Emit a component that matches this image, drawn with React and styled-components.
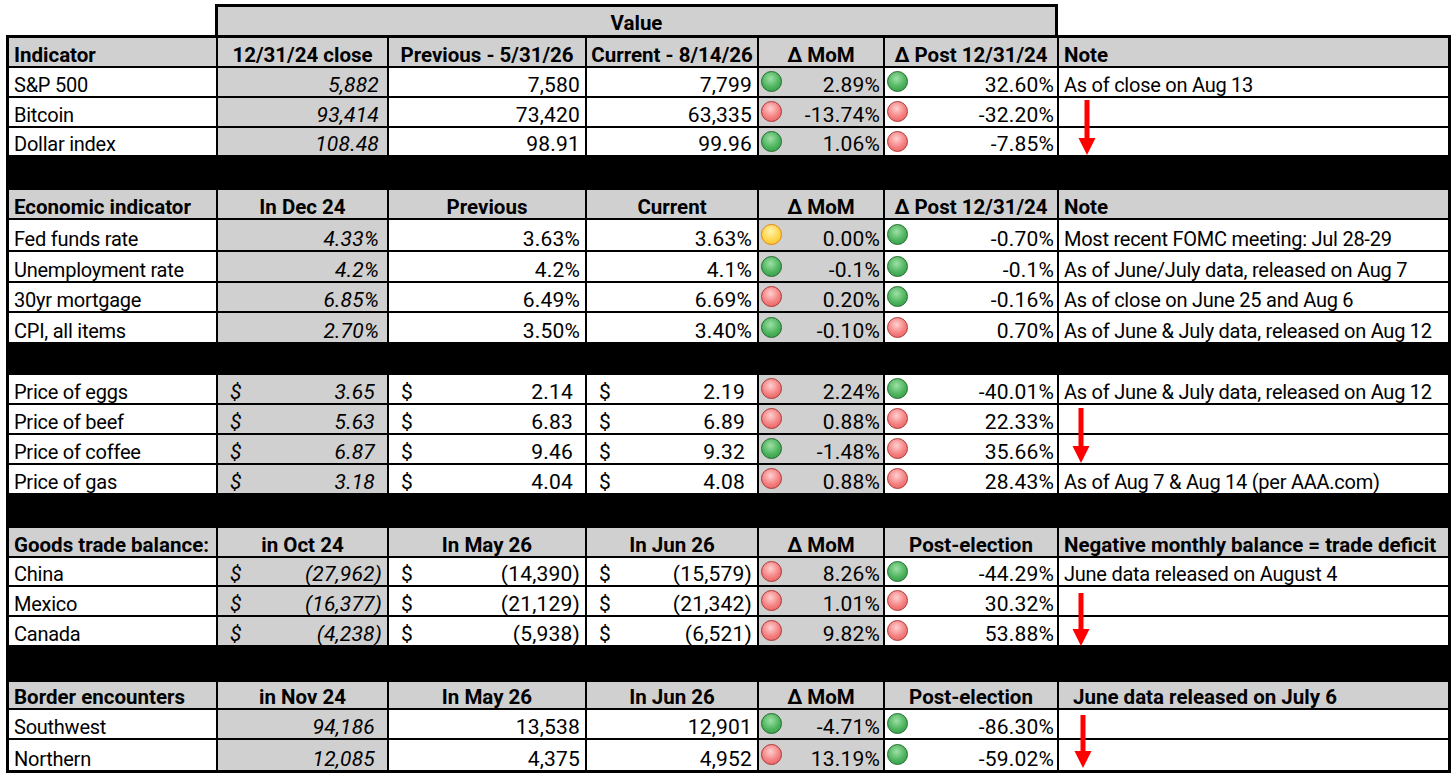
import React from 'react';
import styled, { createGlobalStyle } from 'styled-components';

const GRAY = '#d0d0d0';
const COLS = '209px 171px 198px 172px 126px 174px 1fr';

const GlobalStyle = createGlobalStyle`
  html, body { margin: 0; padding: 0; background: #fff; }
  body { font-family: Roboto, "Liberation Sans", Arial, sans-serif; color: #000; }
`;

const Page = styled.div`
  padding: 4px 0 0 6px;
  width: 1445px;
`;

const ValueBar = styled.div`
  margin-left: 209px;
  width: 843px;
  height: 31px;
  box-sizing: border-box;
  border: 3px solid #000;
  border-bottom: none;
  background: ${GRAY};
  display: flex;
  align-items: flex-end;
  justify-content: center;
  padding-bottom: 2px;
  font-weight: 700;
  font-size: 20.5px;
  line-height: 20px;
`;

const Sheet = styled.div`
  width: 1445px;
  box-sizing: border-box;
  border: 3px solid #000;
`;

const Row = styled.div`
  display: grid;
  grid-template-columns: ${COLS};
  height: ${(p) => p.$h || 30}px;
  box-sizing: border-box;
  border-bottom: 2px solid #000;
  &:last-child { border-bottom: none; }
`;

const Divider = styled.div`
  height: ${(p) => p.$h}px;
  background: #000;
`;

const Cell = styled.div`
  position: relative;
  display: flex;
  align-items: flex-end;
  box-sizing: border-box;
  min-width: 0;
  padding: 0 5px 1px 5px;
  border-right: 2px solid #000;
  background: #fff;
  font-size: 20px;
  line-height: 20px;
  letter-spacing: -0.25px;
  white-space: nowrap;
  &:last-child { border-right: none; }
`;

const HeadCell = styled(Cell)`
  background: ${GRAY};
  font-weight: 700;
  font-size: 20.5px;
  letter-spacing: 0;
  justify-content: ${(p) => (p.$left ? 'flex-start' : 'center')};
  padding-left: ${(p) => p.$indent || 5}px;
`;

const LabelCell = styled(Cell)`
  justify-content: flex-start;
`;

const NumCell = styled(Cell)`
  justify-content: ${(p) => (p.$money ? 'space-between' : 'flex-end')};
  background: ${(p) => (p.$gray ? GRAY : '#fff')};
  font-style: ${(p) => (p.$italic ? 'italic' : 'normal')};
  font-size: 21px;
  letter-spacing: 0.2px;
  padding-left: 12px;
  padding-right: ${(p) => p.$pr}px;
`;

const ChangeCell = styled(Cell)`
  justify-content: space-between;
  padding-left: 2px;
  padding-right: 3px;
  font-size: 21px;
  letter-spacing: 0.2px;
  background: ${(p) => (p.$gray ? GRAY : '#fff')};
`;

const NoteCell = styled(Cell)`
  justify-content: flex-start;
`;

const DOTS = {
  g: { ring: '#1f6a2b', a: '#9ee0a6', b: '#4cb35c', c: '#2f9442' },
  r: { ring: '#ad3434', a: '#ffd0d0', b: '#f47f7f', c: '#e25757' },
  y: { ring: '#e6840a', a: '#fff3b0', b: '#ffd54a', c: '#f7bb22' },
};

const Dot = styled.span`
  flex: none;
  align-self: center;
  width: 21px;
  height: 21px;
  box-sizing: border-box;
  border-radius: 50%;
  border: 1.5px solid ${(p) => DOTS[p.$c].ring};
  background: radial-gradient(
    circle at 45% 35%,
    ${(p) => DOTS[p.$c].a} 0%,
    ${(p) => DOTS[p.$c].b} 55%,
    ${(p) => DOTS[p.$c].c} 100%
  );
`;

const ArrowSvg = styled.svg`
  position: absolute;
  z-index: 2;
  overflow: visible;
`;

function DownArrow({ x, y, h }) {
  return (
    <ArrowSvg width="18" height={h} viewBox={`0 0 18 ${h}`} style={{ left: x, top: y }}>
      <rect x="6.5" y="0" width="5" height={h - 16} fill="#f00" />
      <polygon points={`0.5,${h - 17} 17.5,${h - 17} 9,${h}`} fill="#f00" />
    </ArrowSvg>
  );
}

const sections = [
  {
    header: {
      h: 30,
      cells: ['Indicator', '12/31/24 close', 'Previous - 5/31/26', 'Current - 8/14/26', 'Δ MoM', 'Δ Post 12/31/24', 'Note'],
    },
    rows: [
      { label: 'S&P 500', base: '5,882', prev: '7,580', cur: '7,799', mom: ['g', '2.89%'], post: ['g', '32.60%'], note: 'As of close on Aug 13' },
      { label: 'Bitcoin', base: '93,414', prev: '73,420', cur: '63,335', mom: ['r', '-13.74%'], post: ['r', '-32.20%'], arrow: { x: 19, y: 2, h: 55 } },
      { label: 'Dollar index', base: '108.48', prev: '98.91', cur: '99.96', mom: ['g', '1.06%'], post: ['r', '-7.85%'], h: 29 },
    ],
    divider: 33,
  },
  {
    header: {
      h: 30,
      cells: ['Economic indicator', 'In Dec 24', 'Previous', 'Current', 'Δ MoM', 'Δ Post 12/31/24', 'Note'],
    },
    rows: [
      { label: 'Fed funds rate', base: '4.33%', prev: '3.63%', cur: '3.63%', mom: ['y', '0.00%'], post: ['g', '-0.70%'], note: 'Most recent FOMC meeting: Jul 28-29', h: 32 },
      { label: 'Unemployment rate', base: '4.2%', prev: '4.2%', cur: '4.1%', mom: ['g', '-0.1%'], post: ['g', '-0.1%'], note: 'As of June/July data, released on Aug 7', h: 31 },
      { label: '30yr mortgage', base: '6.85%', prev: '6.49%', cur: '6.69%', mom: ['r', '0.20%'], post: ['g', '-0.16%'], note: 'As of close on June 25 and Aug 6' },
      { label: 'CPI, all items', base: '2.70%', prev: '3.50%', cur: '3.40%', mom: ['g', '-0.10%'], post: ['r', '0.70%'], note: 'As of June & July data, released on Aug 12', h: 31 },
    ],
    divider: 31,
  },
  {
    rows: [
      { label: 'Price of eggs', base: '$3.65', prev: '$2.14', cur: '$2.19', mom: ['r', '2.24%'], post: ['g', '-40.01%'], note: 'As of June & July data, released on Aug 12' },
      { label: 'Price of beef', base: '$5.63', prev: '$6.83', cur: '$6.89', mom: ['r', '0.88%'], post: ['r', '22.33%'], arrow: { x: 13, y: 3, h: 55 } },
      { label: 'Price of coffee', base: '$6.87', prev: '$9.46', cur: '$9.32', mom: ['g', '-1.48%'], post: ['r', '35.66%'] },
      { label: 'Price of gas', base: '$3.18', prev: '$4.04', cur: '$4.08', mom: ['r', '0.88%'], post: ['r', '28.43%'], note: 'As of Aug 7 & Aug 14 (per AAA.com)' },
    ],
    divider: 33,
  },
  {
    header: {
      h: 30,
      cells: ['Goods trade balance:', 'in Oct 24', 'In May 26', 'In Jun 26', 'Δ MoM', 'Post-election', 'Negative monthly balance = trade deficit'],
    },
    rows: [
      { label: 'China', base: '$(27,962)', prev: '$(14,390)', cur: '$(15,579)', mom: ['r', '8.26%'], post: ['g', '-44.29%'], note: 'June data released on August 4', h: 29 },
      { label: 'Mexico', base: '$(16,377)', prev: '$(21,129)', cur: '$(21,342)', mom: ['r', '1.01%'], post: ['r', '30.32%'], arrow: { x: 13, y: 6, h: 53 } },
      { label: 'Canada', base: '$(4,238)', prev: '$(5,938)', cur: '$(6,521)', mom: ['r', '9.82%'], post: ['r', '53.88%'] },
    ],
    divider: 35,
  },
  {
    header: {
      h: 28,
      indent: 14,
      cells: ['Border encounters', 'in Nov 24', 'In May 26', 'In Jun 26', 'Δ MoM', 'Post-election', 'June data released on July 6'],
    },
    rows: [
      { label: 'Southwest', base: '94,186', basePr: 12, prev: '13,538', cur: '12,901', mom: ['g', '-4.71%'], post: ['g', '-86.30%'], arrow: { x: 15, y: 5, h: 53 } },
      { label: 'Northern', base: '12,085', basePr: 12, prev: '4,375', cur: '4,952', mom: ['r', '13.19%'], post: ['g', '-59.02%'] },
    ],
  },
];

function Num({ value, gray, italic, pr }) {
  if (value.startsWith('$')) {
    const n = value.slice(1);
    const neg = n.endsWith(')');
    return (
      <NumCell $money $gray={gray} $italic={italic} $pr={neg ? 5 : 12}>
        <span>$</span>
        <span>{n}</span>
      </NumCell>
    );
  }
  return (
    <NumCell $gray={gray} $italic={italic} $pr={pr || (italic ? 8 : 5)}>
      {value}
    </NumCell>
  );
}

function Change({ data, gray }) {
  return (
    <ChangeCell $gray={gray}>
      <Dot $c={data[0]} />
      <span>{data[1]}</span>
    </ChangeCell>
  );
}

function HeaderRow({ header }) {
  const c = header.cells;
  return (
    <Row $h={header.h}>
      <HeadCell $left>{c[0]}</HeadCell>
      <HeadCell>{c[1]}</HeadCell>
      <HeadCell>{c[2]}</HeadCell>
      <HeadCell>{c[3]}</HeadCell>
      <HeadCell>{c[4]}</HeadCell>
      <HeadCell>{c[5]}</HeadCell>
      <HeadCell $left $indent={header.indent}>{c[6]}</HeadCell>
    </Row>
  );
}

function DataRow({ row }) {
  return (
    <Row $h={row.h}>
      <LabelCell>{row.label}</LabelCell>
      <Num value={row.base} gray italic pr={row.basePr} />
      <Num value={row.prev} />
      <Num value={row.cur} />
      <Change data={row.mom} gray />
      <Change data={row.post} />
      <NoteCell>
        {row.note}
        {row.arrow && <DownArrow {...row.arrow} />}
      </NoteCell>
    </Row>
  );
}

export default function App() {
  return (
    <>
      <GlobalStyle />
      <Page>
        <ValueBar>Value</ValueBar>
        <Sheet>
          {sections.map((s, i) => (
            <React.Fragment key={i}>
              {s.header && <HeaderRow header={s.header} />}
              {s.rows.map((r, j) => (
                <DataRow key={j} row={r} />
              ))}
              {s.divider && <Divider $h={s.divider} />}
            </React.Fragment>
          ))}
        </Sheet>
      </Page>
    </>
  );
}
